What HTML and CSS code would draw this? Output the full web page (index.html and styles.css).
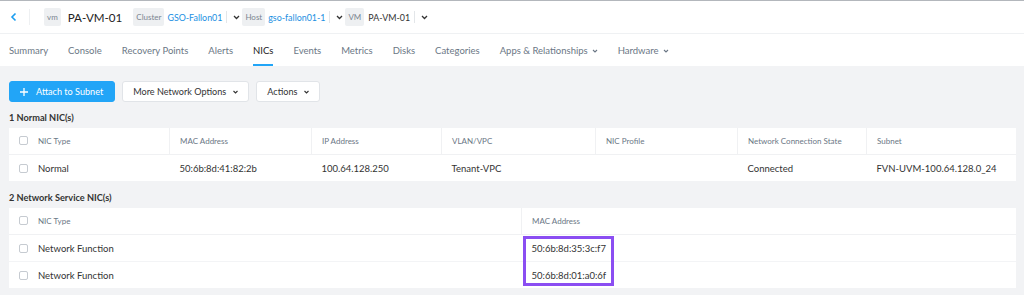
FILE: index.html
```html
<!DOCTYPE html>
<html lang="en">
<head>
    <meta charset="UTF-8">
    <title>PA-VM-01 - NICs</title>
    <link rel="stylesheet" href="styles.css">
</head>
<body>
    <header class="topbar">
        <a class="back" href="#">
            <svg width="7" height="10" viewBox="0 0 7 10"><path d="M5.5 1.5 L2 5 L5.5 8.5" fill="none" stroke="#1b9ef0" stroke-width="1.6"/></svg>
        </a>
        <span class="vdiv"></span>
        <span class="badge">vm</span>
        <span class="title">PA-VM-01</span>

        <span class="crumb">
            <span class="badge">Cluster</span>
            <a class="link" href="#">GSO-Fallon01</a>
            <span class="sep"></span>
            <svg class="caret" width="7" height="5" viewBox="0 0 7 5"><path d="M1 1 L3.5 3.5 L6 1" fill="none" stroke="#333" stroke-width="1.3"/></svg>
        </span>
        <span class="crumb">
            <span class="badge">Host</span>
            <a class="link" href="#">gso-fallon01-1</a>
            <span class="sep"></span>
            <svg class="caret" width="7" height="5" viewBox="0 0 7 5"><path d="M1 1 L3.5 3.5 L6 1" fill="none" stroke="#333" stroke-width="1.3"/></svg>
        </span>
        <span class="crumb">
            <span class="badge">VM</span>
            <span class="plain">PA-VM-01</span>
            <span class="sep"></span>
            <svg class="caret" width="7" height="5" viewBox="0 0 7 5"><path d="M1 1 L3.5 3.5 L6 1" fill="none" stroke="#333" stroke-width="1.3"/></svg>
        </span>
    </header>

    <nav class="tabs">
        <a href="#">Summary</a>
        <a href="#">Console</a>
        <a href="#">Recovery Points</a>
        <a href="#">Alerts</a>
        <a href="#" class="active">NICs</a>
        <a href="#">Events</a>
        <a href="#">Metrics</a>
        <a href="#">Disks</a>
        <a href="#">Categories</a>
        <a href="#">Apps &amp; Relationships <svg width="6" height="4" viewBox="0 0 6 4"><path d="M1 1 L3 3 L5 1" fill="none" stroke="#6b7785" stroke-width="1.1"/></svg></a>
        <a href="#">Hardware <svg width="6" height="4" viewBox="0 0 6 4"><path d="M1 1 L3 3 L5 1" fill="none" stroke="#6b7785" stroke-width="1.1"/></svg></a>
    </nav>

    <main class="content">
        <div class="toolbar">
            <button class="btn btn-primary">
                <svg width="8" height="8" viewBox="0 0 8 8"><path d="M4 0 V8 M0 4 H8" stroke="#fff" stroke-width="1.3"/></svg>
                Attach to Subnet
            </button>
            <button class="btn">
                More Network Options
                <svg width="5" height="4" viewBox="0 0 5 4"><path d="M0.5 1 L2.5 3 L4.5 1" fill="none" stroke="#333" stroke-width="1.1"/></svg>
            </button>
            <button class="btn">
                Actions
                <svg width="5" height="4" viewBox="0 0 5 4"><path d="M0.5 1 L2.5 3 L4.5 1" fill="none" stroke="#333" stroke-width="1.1"/></svg>
            </button>
        </div>

        <h2 class="section-title">1 Normal NIC(s)</h2>
        <table class="grid grid-normal">
            <thead>
                <tr>
                    <th><span class="check"></span>NIC Type</th>
                    <th>MAC Address</th>
                    <th>IP Address</th>
                    <th>VLAN/VPC</th>
                    <th>NIC Profile</th>
                    <th>Network Connection State</th>
                    <th>Subnet</th>
                </tr>
            </thead>
            <tbody>
                <tr>
                    <td><span class="check"></span>Normal</td>
                    <td>50:6b:8d:41:82:2b</td>
                    <td>100.64.128.250</td>
                    <td>Tenant-VPC</td>
                    <td></td>
                    <td>Connected</td>
                    <td>FVN-UVM-100.64.128.0_24</td>
                </tr>
            </tbody>
        </table>

        <h2 class="section-title second">2 Network Service NIC(s)</h2>
        <div class="table-wrap">
            <table class="grid grid-service">
                <thead>
                    <tr>
                        <th><span class="check"></span>NIC Type</th>
                        <th>MAC Address</th>
                    </tr>
                </thead>
                <tbody>
                    <tr>
                        <td><span class="check"></span>Network Function</td>
                        <td>50:6b:8d:35:3c:f7</td>
                    </tr>
                    <tr>
                        <td><span class="check"></span>Network Function</td>
                        <td>50:6b:8d:01:a0:6f</td>
                    </tr>
                </tbody>
            </table>
            <div class="highlight"></div>
        </div>
    </main>
</body>
</html>
```

FILE: styles.css
```css
body {
    margin: 0;
    font-family: Lato, "Open Sans", sans-serif;
    color: #333;
    background: #f2f3f5;
    border-top: 1px solid #b3b7bc;
}

/* header */
.topbar {
    display: flex;
    align-items: center;
    height: 32px;
    background: #fff;
    border-bottom: 1px solid #eff1f3;
    font-size: 9.3px;
}
.back {
    display: flex;
    width: 32px;
    justify-content: center;
    margin-left: -3px;
}
.vdiv {
    width: 1px;
    height: 16px;
    background: #eef0f2;
    margin-right: 14px;
}
.badge {
    background: #eef0f2;
    color: #7a8591;
    font-size: 8px;
    height: 18px;
    line-height: 18px;
    padding: 0 3px;
    border-radius: 2px;
}
.title {
    font-size: 11.6px;
    color: #222;
    margin-left: 7px;
    margin-right: 11px;
}
.crumb {
    display: flex;
    align-items: center;
    margin-right: 2px;
}
.link {
    color: #1b8fe2;
    font-size: 8.9px;
    text-decoration: none;
    margin-left: 3px;
}
.plain {
    color: #333;
    font-size: 8.9px;
    margin-left: 4px;
}
.sep {
    width: 1px;
    height: 12px;
    background: #e3e6e9;
    margin: 0 6px 0 4px;
}

/* tabs */
.tabs {
    display: flex;
    gap: 20px;
    height: 32px;
    padding-left: 9px;
    background: #fff;
    font-size: 9.5px;
}
.tabs a {
    display: flex;
    align-items: center;
    gap: 4px;
    color: #6b7785;
    text-decoration: none;
    border-bottom: 2px solid transparent;
    padding-top: 3px;
}
.tabs a.active {
    color: #222;
    border-bottom-color: #22a5f7;
}

/* content */
.content {
    padding: 14px 8px 0 9px;
}
.toolbar {
    display: flex;
    gap: 7px;
    padding-top: 1px;
}
.btn {
    display: flex;
    align-items: center;
    gap: 7px;
    height: 21px;
    padding: 0 10px;
    font-family: inherit;
    font-size: 9.1px;
    color: #333;
    background: #fff;
    border: 1px solid #e1e4e8;
    border-radius: 3px;
}
.btn-primary {
    background: #22a5f7;
    border-color: #22a5f7;
    color: #fff;
    gap: 8px;
    padding-right: 11px;
}
.section-title {
    margin: 0;
    height: 26px;
    line-height: 32px;
    font-size: 9.2px;
    font-weight: 700;
    color: #333;
}
.section-title.second {
    line-height: 29px;
    height: 25px;
    margin-top: 2px;
}

.grid {
    width: 100%;
    border-collapse: collapse;
    background: #fff;
    table-layout: fixed;
}
.grid th {
    height: 26px;
    padding: 0 10px;
    text-align: left;
    font-size: 8px;
    font-weight: 400;
    color: #6b7785;
    border-left: 1px solid #f0f1f3;
    border-bottom: 1px solid #f0f1f3;
    white-space: nowrap;
}
.grid th:first-child,
.grid td:first-child {
    border-left: none;
    padding-left: 10px;
}
.grid td {
    height: 26px;
    padding: 0 10px;
    font-size: 9.5px;
    color: #333;
    border-bottom: 1px solid #f3f4f6;
    white-space: nowrap;
}
.grid tbody tr:last-child td {
    border-bottom: none;
}
.check {
    display: inline-block;
    width: 7px;
    height: 7px;
    border: 1px solid #c6cbd1;
    border-radius: 2px;
    background: #fff;
    vertical-align: -1px;
    margin-right: 10px;
}

.grid-normal th:nth-child(1) { width: 140px; }
.grid-normal th:nth-child(2) { width: 121px; }
.grid-normal th:nth-child(3) { width: 109px; }
.grid-normal th:nth-child(4) { width: 133px; }
.grid-normal th:nth-child(5) { width: 121px; }
.grid-normal th:nth-child(6) { width: 108px; }

.grid-service th:nth-child(1) { width: 492px; }

.table-wrap {
    position: relative;
}
.highlight {
    position: absolute;
    left: 514px;
    top: 28px;
    width: 91px;
    height: 50px;
    box-sizing: border-box;
    border: 3px solid #8b4ef2;
}
```
